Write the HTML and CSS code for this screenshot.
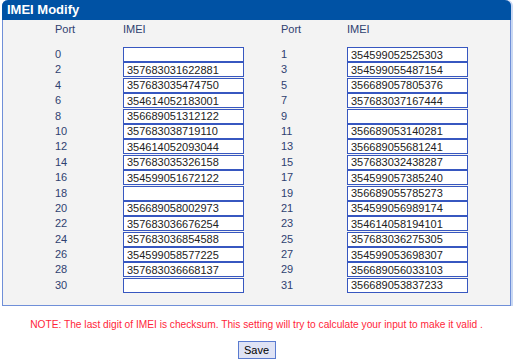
FILE: index.html
```html
<!DOCTYPE html>
<html lang="en">
  <head>
    <meta charset="UTF-8" />
    <title>IMEI Modify</title>
    <link rel="stylesheet" href="styles.css">
  </head>
  <body>
    <div class="panel">
      <div class="panel_title">IMEI Modify</div>
      <div class="imei_grid">
        <div class="head">Port</div><div class="head">IMEI</div><div class="head">Port</div><div class="head">IMEI</div>

        <div class="port">0</div><div><input class="imei" value=""></div><div class="port">1</div><div><input class="imei" value="354599052525303"></div>
        <div class="port">2</div><div><input class="imei" value="357683031622881"></div><div class="port">3</div><div><input class="imei" value="354599055487154"></div>
        <div class="port">4</div><div><input class="imei" value="357683035474750"></div><div class="port">5</div><div><input class="imei" value="356689057805376"></div>
        <div class="port">6</div><div><input class="imei" value="354614052183001"></div><div class="port">7</div><div><input class="imei" value="357683037167444"></div>
        <div class="port">8</div><div><input class="imei" value="356689051312122"></div><div class="port">9</div><div><input class="imei" value=""></div>
        <div class="port">10</div><div><input class="imei" value="357683038719110"></div><div class="port">11</div><div><input class="imei" value="356689053140281"></div>
        <div class="port">12</div><div><input class="imei" value="354614052093044"></div><div class="port">13</div><div><input class="imei" value="356689055681241"></div>
        <div class="port">14</div><div><input class="imei" value="357683035326158"></div><div class="port">15</div><div><input class="imei" value="357683032438287"></div>
        <div class="port">16</div><div><input class="imei" value="354599051672122"></div><div class="port">17</div><div><input class="imei" value="354599057385240"></div>
        <div class="port">18</div><div><input class="imei" value=""></div><div class="port">19</div><div><input class="imei" value="356689055785273"></div>
        <div class="port">20</div><div><input class="imei" value="356689058002973"></div><div class="port">21</div><div><input class="imei" value="354599056989174"></div>
        <div class="port">22</div><div><input class="imei" value="357683036676254"></div><div class="port">23</div><div><input class="imei" value="354614058194101"></div>
        <div class="port">24</div><div><input class="imei" value="357683036854588"></div><div class="port">25</div><div><input class="imei" value="357683036275305"></div>
        <div class="port">26</div><div><input class="imei" value="354599058577225"></div><div class="port">27</div><div><input class="imei" value="354599053698307"></div>
        <div class="port">28</div><div><input class="imei" value="357683036668137"></div><div class="port">29</div><div><input class="imei" value="356689056033103"></div>
        <div class="port">30</div><div><input class="imei" value=""></div><div class="port">31</div><div><input class="imei" value="356689053837233"></div>
      </div>
    </div>

    <p class="note">NOTE: The last digit of IMEI is checksum. This setting will try to calculate your input to make it valid .</p>

    <div class="button_wrapper">
      <button class="save_button">Save</button>
    </div>
  </body>
</html>
```

FILE: styles.css
```css
body {
  margin: 0;
  font-family: "Liberation Sans", Arial, sans-serif;
  font-size: 11px;
}

.panel {
  margin: 0 2px 0 2px;
  width: 507px;
  border: 1px solid #6f8fd8;
  border-top: none;
  border-radius: 6px 6px 0 0;
  background-color: #f3f3f3;
  box-shadow: 2px 0 0 #c9d8f3;
}

.panel_title {
  height: 20px;
  line-height: 20px;
  padding-left: 5px;
  background-color: #0052a4;
  color: white;
  font-size: 13px;
  font-weight: bold;
  border-radius: 6px 6px 0 0;
  margin: 0 -1px;
}

.imei_grid {
  display: grid;
  grid-template-columns: 68px 158px 66px 121px;
  grid-template-rows: 24px;
  grid-auto-rows: 15.4px;
  padding: 3px 0 12px 52px;
  color: #2f4170;
}

.head {
  line-height: 12px;
}

.port {
  line-height: 15px;
}

.imei {
  box-sizing: border-box;
  width: 121px;
  height: 15px;
  margin: 0;
  padding: 0 0 0 3px;
  border: 1px solid #3757c0;
  background: white;
  font-family: "Liberation Sans", Arial, sans-serif;
  font-size: 11px;
  color: #222;
}

.note {
  margin: 13px 0 0 0;
  text-align: center;
  color: #ff1f3a;
  font-size: 10.2px;
}

.button_wrapper {
  text-align: center;
  margin-top: 11px;
}

.save_button {
  width: 38px;
  height: 18px;
  padding: 0;
  font-family: "Liberation Sans", Arial, sans-serif;
  font-size: 11px;
  color: black;
  background-color: #dfe3f5;
  border: 1px solid #5a7bd0;
}
```
